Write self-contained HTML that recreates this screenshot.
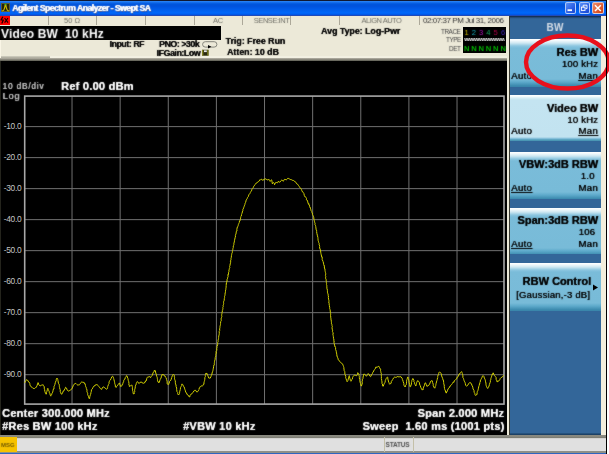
<!DOCTYPE html>
<html><head><meta charset="utf-8">
<style>
*{margin:0;padding:0;box-sizing:border-box}
html,body{width:609px;height:454px;overflow:hidden;background:#fff}
body{position:relative;font-family:"Liberation Sans",sans-serif}
.a{position:absolute}
.t{position:absolute;white-space:pre;line-height:1;filter:url(#soft)}
#win{left:0;top:0;width:607px;height:454px;background:#ece9d8}
#title{left:0;top:0;width:606px;height:16px;background:linear-gradient(#101830 0,#101830 0.9px,#2a86f4 1.2px,#1a74f0 2px,#0056dc 4px,#0052dc 6px,#0062f2 11px,#0068fa 13px,#0058e8 14.5px,#1a48c0 15.3px,#3050a8 16px)}
.ttext{color:#fff;font-weight:bold;font-size:8.7px;text-shadow:0.6px 0 0 #fff,1px 1px 0 #0a2a80}
.wbtn{top:2.2px;width:11.3px;height:11.5px;border:1px solid rgba(220,235,255,0.75);border-radius:2px;background:linear-gradient(135deg,#5a90f8,#2456e0 70%,#1a48d0)}
#stat{left:0;top:16px;width:508px;height:9.5px;background:#ece9d8}
.sep{top:16px;width:1px;height:9px;background:#aca899}
.st{color:#6e6e66;font-size:7.5px;top:17.3px;letter-spacing:-0.25px}
#hdr{left:0;top:25.5px;width:221.2px;height:14.3px;background:#000}
#info{left:0;top:25.5px;width:508px;height:35px;background:#ece9d8}
#infob{left:0;top:58px;width:508px;height:3px;background:linear-gradient(#b8b5a8,#5a5a50)}
#graph{left:0;top:61px;width:506.5px;height:374.5px;background:#000}
#lb{left:0;top:61px;width:1.2px;height:374.5px;background:#24241c}
#rbeige{left:506.5px;top:25px;width:2.3px;height:411px;background:#ece9d8}
#rdark{left:508.8px;top:16px;width:1.2px;height:420px;background:#3a3a30}
#panel{left:510px;top:16px;width:90.5px;height:420px;background:linear-gradient(#102848 0,#1c3c64 1px,#2c5a8a 2px,#336699 3px)}
#pshadow{left:510px;top:433px;width:90.5px;height:3px;background:linear-gradient(#2a5a88,#0e2844)}
#pbeige{left:600.5px;top:16px;width:5.3px;height:420px;background:#f2eedc}
#rblack{left:605.8px;top:0;width:1.2px;height:454px;background:#000}
.btn{left:509.5px;width:91px;height:47.5px;background:linear-gradient(#ffffff 0,#f2f9fc 1.5px,#cfe8f2 4px,#8cc6e0 7px,#7abcd9 9px,#78bbd8 40px,#5eaacb 43px,#3e8cb0 46.5px,#3a86ab 47.5px)}
.btn.sel{height:45.5px;background:linear-gradient(#ffffff 0,#f4fafc 1.5px,#d8eef6 3px,#c4e4f1 5px,#c2e3f0 42px,#86c0da 43.5px,#4c9ab8 45px,#4a96b4 45.5px)}
.bt{color:#000;font-size:11px;font-weight:bold;right:11px;text-shadow:0.3px 0 0 #000}
.bv{color:#000;font-size:9.5px;right:11px;letter-spacing:0.2px;text-shadow:0.4px 0 0 #000}
.bam{color:#000;font-size:9.6px;letter-spacing:0.35px;text-shadow:0.4px 0 0 #000}
.u{text-decoration:underline}
#bot{left:0;top:435px;width:606px;height:18px;background:linear-gradient(#8a8a80 0,#8a8a80 1.4px,#74746a 2.4px,#c8c8c4 3.2px,#e0e0e0 3.9px,#e0e0e0 15.5px,#909088 16.3px,#909088 18px)}
#msg{left:0;top:437.4px;width:17.2px;height:14.9px;background:#f6c200}
#blu{left:0;top:452.6px;width:606px;height:1.4px;background:#2f66c0}
.yl{position:absolute;left:0;width:21.2px;text-align:right;color:#c4c4c4;font-size:8.4px;letter-spacing:-0.35px;line-height:1;white-space:pre}
.w{color:#fff;font-weight:bold;font-size:11px;letter-spacing:0.25px;text-shadow:0.2px 0 0 #fff}
.inf{color:#000;font-weight:bold;font-size:8.8px;text-shadow:0.25px 0 0 #000}
</style></head><body><svg width="0" height="0" style="position:absolute"><filter id="soft" x="-20%" y="-60%" width="140%" height="220%"><feConvolveMatrix order="3" kernelMatrix="1 2 1 2 20 2 1 2 1" divisor="32" edgeMode="none" preserveAlpha="false"/></filter></svg><div id="root" style="position:absolute;left:0;top:0;width:609px;height:454px;">
<div class="a" id="win"></div>
<div class="a" id="title"></div>
<!-- window icon -->
<div class="a" style="left:1px;top:3.2px;width:8.7px;height:9.1px;background:#23230f;border:1px solid #5a5a38"></div>
<svg class="a" style="left:1px;top:3.2px" width="9" height="10"><path d="M0.8,8 L2.6,7.4 L3.6,5 L4.2,1.8 L4.8,1.8 L5.4,5 L6.4,7.4 L8.2,8" stroke="#c8b800" stroke-width="1.1" fill="none"/><rect x="3.7" y="0.8" width="1.6" height="1.4" fill="#30c030"/></svg>
<div class="t ttext" style="left:12px;top:4.1px;letter-spacing:-0.55px">Agilent Spectrum Analyzer - Swept SA</div>
<div class="a wbtn" style="left:565.1px"></div>
<div class="a wbtn" style="left:578.8px"></div>
<div class="a wbtn" style="left:592.3px;background:linear-gradient(135deg,#f09070,#e05a30 60%,#c84010)"></div>
<svg class="a" style="left:565px;top:2px" width="40" height="12"><rect x="2.5" y="7.3" width="4.5" height="1.8" fill="#fff"/><path d="M18.2,5.5 V3.2 H22 V6.6 H20.5" fill="none" stroke="#fff" stroke-width="0.9"/><rect x="16.4" y="5.1" width="3.6" height="3.3" fill="none" stroke="#fff" stroke-width="0.9"/><path d="M30,3.3 L35.8,9 M35.8,3.3 L30,9" stroke="#fff" stroke-width="1.5"/></svg>

<div class="a" id="stat"></div>
<div class="a" style="left:0;top:16.3px;width:9.5px;height:8.3px;background:#f00"></div>
<svg class="a" style="left:0;top:16.3px" width="10" height="9"><path d="M2.8,0.8 L1.2,3.8 L3.2,4.2 L1.8,7.6" stroke="#1a0000" stroke-width="1.3" fill="none"/><path d="M4.6,2 L8,6.6 M8,2 L4.6,6.6" stroke="#1a0000" stroke-width="1.2" fill="none"/></svg>
<div class="a sep" style="left:48.3px"></div>
<div class="a sep" style="left:96.3px"></div>
<div class="a sep" style="left:145px"></div>
<div class="a sep" style="left:193.6px"></div>
<div class="a sep" style="left:242px"></div>
<div class="a sep" style="left:290.3px"></div>
<div class="a sep" style="left:339px"></div>
<div class="a sep" style="left:418.5px"></div>
<div class="t st" style="left:64px;font-size:7.5px;letter-spacing:0">50 Ω</div>
<div class="t st" style="left:213px">AC</div>
<div class="t st" style="left:253.8px;letter-spacing:-0.45px">SENSE:INT</div>
<div class="t st" style="left:361.5px;letter-spacing:-0.5px">ALIGN AUTO</div>
<div class="t st" style="left:423px;color:#303030;font-size:8px;letter-spacing:-0.45px;top:17px">02:07:37 PM Jul 31, 2006</div>

<div class="a" id="info"></div>
<div class="a" id="hdr"></div>
<div class="t" style="left:1px;top:27.9px;color:#fff;font-size:12px;font-weight:bold;letter-spacing:0.15px">Video BW  10 kHz</div>
<div class="a" id="infob"></div>
<div class="a" style="left:0;top:56.3px;width:49.7px;height:2px;background:linear-gradient(#d4d2c4,#a8a698)"></div>
<div class="a" style="left:49.7px;top:56.2px;width:458px;height:1.8px;background:#f2f0e2"></div>
<div class="t inf" style="left:109.5px;top:40px;letter-spacing:-0.45px">Input: RF</div>
<div class="t inf" style="left:159px;top:40px;letter-spacing:-0.45px">PNO: &gt;30k</div>
<div class="t inf" style="left:156.5px;top:49px;letter-spacing:-0.42px">IFGain:Low</div>
<svg class="a" style="left:195px;top:38px" width="30" height="22"><rect x="7.6" y="3.7" width="14.3" height="5.4" rx="2.7" fill="none" stroke="#7a7a72" stroke-width="0.9"/><path d="M13,6.9 L16.4,8.7 L13,10.6 Z" fill="#000"/><rect x="7.1" y="11.8" width="6.4" height="5.9" fill="#2a2a10"/><rect x="7.1" y="11.8" width="1.2" height="5.9" fill="#8a8a20"/><rect x="12.3" y="11.8" width="1.2" height="5.9" fill="#8a8a20"/><rect x="9" y="12.3" width="2.8" height="1.8" fill="#e8e8e8"/></svg>
<div class="t inf" style="left:225.5px;top:37px">Trig: Free Run</div>
<div class="t inf" style="left:227px;top:48px">Atten: 10 dB</div>
<div class="t inf" style="left:321px;top:27px">Avg Type: Log-Pwr</div>
<div class="t" style="left:441px;top:28.6px;font-size:6.4px;color:#404040;letter-spacing:-0.45px">TRACE</div>
<div class="t" style="left:446px;top:37px;font-size:6.4px;color:#404040;letter-spacing:-0.45px">TYPE</div>
<div class="t" style="left:449px;top:45.5px;font-size:6.4px;color:#404040;letter-spacing:-0.45px">DET</div>
<div class="a" style="left:462.5px;top:27px;width:43.7px;height:26px;background:#000"></div>
<div class="t" style="left:464.4px;top:28.6px;font-size:7.6px;color:#c8b400">1</div><div class="t" style="left:471.7px;top:28.6px;font-size:7.6px;color:#10a8b8">2</div><div class="t" style="left:479.0px;top:28.6px;font-size:7.6px;color:#b010b8">3</div><div class="t" style="left:486.3px;top:28.6px;font-size:7.6px;color:#10a860">4</div><div class="t" style="left:493.6px;top:28.6px;font-size:7.6px;color:#b00848">5</div><div class="t" style="left:500.9px;top:28.6px;font-size:7.6px;color:#4020c0">6</div>
<svg class="a" style="left:0;top:0" width="609" height="60"><path d="M464.5,38 L465.35,41 L466.20,38 L467.05,41 L467.90,38 L468.75,41 L469.60,38 L470.45,41 L471.30,38 L472.15,41 L473.00,38 L473.85,41 L474.70,38 L475.55,41 L476.40,38 L477.25,41 L478.10,38 L478.95,41 L479.80,38 L480.65,41 L481.50,38 L482.35,41 L483.20,38 L484.05,41 L484.90,38 L485.75,41 L486.60,38 L487.45,41 L488.30,38 L489.15,41 L490.00,38 L490.85,41 L491.70,38 L492.55,41 L493.40,38 L494.25,41 L495.10,38 L495.95,41 L496.80,38 L497.65,41 L498.50,38 L499.35,41 L500.20,38 L501.05,41 L501.90,38 L502.75,41 L503.60,38 L504.45,41" stroke="#c8c8c8" stroke-width="0.8" fill="none"/></svg>
<div class="t" style="left:463.9px;top:45px;font-size:7.6px;font-weight:bold;color:#00b400">N</div><div class="t" style="left:471.2px;top:45px;font-size:7.6px;font-weight:bold;color:#00b400">N</div><div class="t" style="left:478.5px;top:45px;font-size:7.6px;font-weight:bold;color:#00b400">N</div><div class="t" style="left:485.8px;top:45px;font-size:7.6px;font-weight:bold;color:#00b400">N</div><div class="t" style="left:493.1px;top:45px;font-size:7.6px;font-weight:bold;color:#00b400">N</div><div class="t" style="left:500.4px;top:45px;font-size:7.6px;font-weight:bold;color:#00b400">N</div>

<div class="a" id="graph"></div>
<div class="a" id="lb"></div>
<div class="a" style="left:0;top:39.8px;width:1.2px;height:18.5px;background:#faf6e6"></div>
<div class="t" style="left:2.5px;top:83px;color:#c4c4c4;font-size:8.2px;letter-spacing:0.85px;text-shadow:0.3px 0 0 #c4c4c4">10 dB/div</div>
<div class="t" style="left:2.5px;top:91.9px;color:#c4c4c4;font-size:9.2px;letter-spacing:0.8px;text-shadow:0.4px 0 0 #c4c4c4">Log</div>
<div class="t w" style="left:61px;top:81px;font-size:11px">Ref 0.00 dBm</div>
<div class="yl" style="top:122.0px">-10.0</div>
<div class="yl" style="top:153.0px">-20.0</div>
<div class="yl" style="top:184.0px">-30.0</div>
<div class="yl" style="top:215.0px">-40.0</div>
<div class="yl" style="top:246.1px">-50.0</div>
<div class="yl" style="top:277.1px">-60.0</div>
<div class="yl" style="top:308.1px">-70.0</div>
<div class="yl" style="top:339.1px">-80.0</div>
<div class="yl" style="top:370.1px">-90.0</div>
<svg class="a" style="left:0;top:0" width="609" height="454">
<g stroke="#707070" stroke-width="1">
<line x1="72.03" y1="96.1" x2="72.03" y2="404.1"/>
<line x1="120.15" y1="96.1" x2="120.15" y2="404.1"/>
<line x1="168.28" y1="96.1" x2="168.28" y2="404.1"/>
<line x1="216.40" y1="96.1" x2="216.40" y2="404.1"/>
<line x1="264.52" y1="96.1" x2="264.52" y2="404.1"/>
<line x1="312.65" y1="96.1" x2="312.65" y2="404.1"/>
<line x1="360.77" y1="96.1" x2="360.77" y2="404.1"/>
<line x1="408.90" y1="96.1" x2="408.90" y2="404.1"/>
<line x1="457.02" y1="96.1" x2="457.02" y2="404.1"/>
<line x1="24.7" y1="126.61" x2="504.0" y2="126.61"/>
<line x1="24.7" y1="157.62" x2="504.0" y2="157.62"/>
<line x1="24.7" y1="188.63" x2="504.0" y2="188.63"/>
<line x1="24.7" y1="219.64" x2="504.0" y2="219.64"/>
<line x1="24.7" y1="250.65" x2="504.0" y2="250.65"/>
<line x1="24.7" y1="281.66" x2="504.0" y2="281.66"/>
<line x1="24.7" y1="312.67" x2="504.0" y2="312.67"/>
<line x1="24.7" y1="343.68" x2="504.0" y2="343.68"/>
<line x1="24.7" y1="374.69" x2="504.0" y2="374.69"/>
</g>
<rect x="24.7" y="96.1" width="479.3" height="308.0" fill="none" stroke="#a8a8a8" stroke-width="1.6"/>
<path d="M24.41,383.02 L24.91,382.39 L25.34,381.89 L25.65,381.16 L26.20,380.34 L26.68,379.55 L27.45,380.42 L27.80,380.38 L28.66,382.19 L28.96,382.18 L29.52,382.53 L29.83,383.64 L29.86,384.31 L30.34,385.92 L30.66,386.40 L31.27,386.76 L32.09,387.37 L32.71,388.09 L33.89,388.52 L34.61,388.48 L35.58,387.56 L36.55,387.12 L36.67,386.17 L37.16,385.41 L37.58,383.66 L38.01,382.59 L38.06,382.88 L38.31,383.01 L38.61,384.30 L39.38,385.38 L39.99,385.80 L40.67,385.87 L41.53,384.95 L42.62,384.89 L43.29,384.88 L43.35,385.41 L43.91,386.46 L44.25,386.58 L44.28,388.03 L44.34,388.90 L44.64,389.62 L44.82,391.40 L45.07,391.79 L45.42,393.28 L45.48,393.41 L45.92,394.22 L46.41,394.02 L46.46,392.57 L46.80,391.73 L47.40,389.55 L47.35,388.61 L47.77,388.58 L48.21,388.65 L48.20,389.46 L48.67,390.51 L49.27,391.70 L49.36,392.73 L49.77,393.20 L50.21,394.97 L50.52,395.76 L50.62,395.80 L50.80,396.15 L51.04,395.32 L51.38,395.03 L51.72,394.34 L51.83,393.75 L52.16,393.17 L52.41,392.83 L52.99,391.07 L53.08,390.30 L53.42,389.06 L53.93,389.05 L54.00,387.57 L54.06,386.30 L54.42,385.74 L54.96,384.70 L54.83,384.56 L55.34,382.65 L55.60,381.49 L55.84,381.57 L56.24,380.38 L56.18,379.26 L56.36,379.12 L56.78,378.74 L56.91,378.00 L57.39,378.98 L57.65,379.19 L57.87,379.74 L57.81,380.29 L58.10,380.66 L58.17,381.93 L58.51,383.41 L59.08,384.15 L59.30,385.69 L59.53,385.85 L59.37,386.54 L59.55,387.45 L59.94,389.21 L60.22,389.75 L60.30,391.09 L60.20,391.85 L60.82,392.78 L60.97,393.10 L60.94,393.90 L61.32,394.13 L62.03,393.57 L62.19,393.71 L62.85,392.11 L63.07,391.18 L63.99,390.92 L64.13,389.97 L65.06,388.94 L65.21,388.18 L65.52,387.27 L66.55,388.14 L66.84,389.25 L67.25,390.23 L67.92,390.44 L68.18,390.97 L68.80,391.20 L69.48,390.63 L70.11,390.57 L70.93,389.34 L71.74,389.04 L72.16,388.39 L72.70,387.13 L73.21,385.66 L73.67,384.93 L73.96,384.78 L74.54,383.77 L75.31,383.46 L75.97,383.50 L76.93,384.51 L77.56,385.02 L78.47,384.95 L79.30,384.85 L79.76,384.45 L80.50,383.28 L80.92,382.55 L81.43,382.15 L81.98,381.74 L82.57,382.26 L83.26,382.41 L83.96,382.16 L84.36,383.57 L85.09,383.59 L85.31,385.14 L85.51,385.50 L85.73,386.69 L86.31,387.77 L86.22,388.49 L86.70,388.84 L87.04,390.77 L86.94,391.81 L87.26,392.34 L87.78,393.75 L87.58,394.29 L87.98,395.10 L88.04,395.91 L88.51,396.30 L88.63,397.35 L88.57,397.66 L89.06,398.11 L89.08,398.68 L89.72,398.33 L89.65,396.91 L89.88,396.61 L90.25,394.87 L90.57,394.61 L91.02,392.77 L90.93,392.43 L91.38,391.25 L91.39,389.81 L92.10,389.26 L92.19,388.96 L92.86,388.04 L92.99,387.44 L93.41,386.87 L94.08,385.82 L94.93,385.90 L95.68,384.65 L96.72,384.67 L97.40,384.83 L97.96,385.37 L98.68,386.30 L99.49,387.23 L99.93,388.03 L100.40,388.59 L100.88,388.97 L101.80,389.29 L102.14,388.33 L103.12,386.98 L103.76,386.83 L104.43,387.61 L105.30,388.08 L106.36,389.27 L107.02,388.97 L107.50,388.34 L107.62,387.44 L107.70,386.47 L107.95,386.30 L108.28,384.75 L108.44,384.56 L109.07,383.44 L109.03,382.09 L109.31,381.53 L109.53,380.84 L110.11,380.33 L111.04,378.73 L111.27,378.14 L111.90,376.67 L112.32,376.30 L113.09,376.60 L113.17,376.96 L113.29,377.26 L113.54,378.16 L113.71,378.63 L114.03,379.85 L114.36,381.22 L114.62,382.43 L114.79,383.73 L114.82,384.11 L115.31,384.81 L115.38,386.11 L115.25,386.90 L115.90,387.04 L116.34,387.34 L116.60,386.42 L117.36,385.77 L118.09,384.67 L118.53,383.85 L119.09,383.21 L119.49,383.05 L119.95,384.73 L120.51,386.37 L121.53,386.14 L121.85,385.84 L122.11,384.53 L122.61,384.63 L122.83,383.55 L123.30,382.09 L123.74,381.30 L123.81,380.30 L124.55,379.24 L124.95,379.15 L125.22,377.65 L125.60,377.26 L126.10,376.62 L126.37,375.66 L126.42,375.73 L127.02,375.93 L127.21,376.01 L127.21,376.91 L127.76,378.17 L128.00,378.65 L128.13,379.86 L128.32,380.54 L128.73,381.70 L128.97,383.54 L128.68,383.97 L129.27,385.37 L129.28,385.28 L129.35,386.49 L130.51,385.78 L131.52,385.23 L132.12,385.30 L132.24,386.47 L132.46,387.63 L132.32,388.91 L132.63,389.07 L132.57,390.69 L132.98,391.52 L133.01,392.46 L133.30,393.69 L133.34,394.00 L133.97,393.38 L134.18,393.82 L134.35,392.90 L134.26,392.38 L134.76,391.79 L134.62,390.69 L134.77,389.26 L134.87,389.06 L135.15,388.08 L135.33,386.27 L135.65,385.16 L135.77,385.07 L136.22,384.09 L136.28,383.53 L136.62,382.65 L137.38,381.56 L138.25,382.78 L139.13,383.56 L139.76,382.56 L140.95,382.09 L141.59,382.03 L142.27,382.98 L143.38,383.24 L144.18,383.18 L144.49,382.89 L144.71,382.06 L145.17,382.16 L145.77,380.58 L146.45,380.57 L146.69,378.76 L147.02,377.88 L147.54,377.15 L147.90,376.74 L148.43,377.03 L149.48,376.49 L150.09,377.45 L150.94,377.22 L151.14,376.67 L151.99,375.77 L152.17,375.43 L152.77,373.98 L152.90,373.00 L153.38,372.26 L154.05,371.87 L154.37,370.33 L154.27,370.73 L155.23,370.49 L155.45,370.73 L155.70,372.99 L156.36,374.39 L156.64,374.38 L156.41,375.09 L156.83,376.62 L157.27,377.69 L157.35,378.78 L157.49,379.57 L157.53,380.78 L157.88,381.76 L158.34,381.75 L158.34,382.14 L158.87,382.82 L158.91,381.96 L159.44,382.01 L159.70,380.83 L160.15,379.62 L160.34,379.03 L161.02,378.12 L161.34,376.87 L161.37,375.68 L162.08,375.46 L162.10,374.27 L162.91,374.78 L163.60,374.62 L164.44,376.02 L164.92,375.93 L165.62,377.31 L166.11,377.74 L166.44,379.22 L166.54,379.66 L167.02,380.86 L167.18,381.83 L167.14,383.34 L167.47,384.28 L167.90,383.89 L168.16,384.21 L168.70,384.54 L168.80,383.42 L169.21,383.32 L169.59,381.41 L169.97,380.78 L170.83,380.25 L171.19,379.29 L171.72,377.50 L171.78,377.21 L172.47,375.40 L172.81,375.15 L173.02,374.71 L173.23,374.25 L173.55,374.81 L174.13,374.92 L174.35,375.55 L174.25,376.92 L174.67,377.30 L174.46,378.25 L174.79,379.72 L174.86,380.14 L175.37,380.82 L175.29,382.72 L175.62,382.89 L175.42,383.87 L176.03,384.96 L176.12,386.44 L176.15,386.71 L176.69,388.12 L176.57,389.31 L176.82,389.90 L176.88,391.48 L177.57,392.33 L177.81,392.52 L177.69,393.75 L178.30,394.81 L178.27,394.36 L178.56,394.69 L179.05,394.13 L179.24,394.24 L179.51,393.55 L179.67,392.15 L179.79,391.15 L180.30,389.72 L180.29,389.32 L180.59,387.43 L180.77,386.91 L181.19,386.44 L181.75,385.68 L181.71,384.13 L181.90,384.30 L182.59,384.26 L182.73,384.61 L183.30,385.57 L183.74,386.66 L184.07,386.88 L184.53,388.16 L184.77,389.31 L185.24,390.08 L185.37,390.92 L185.83,392.52 L186.56,392.85 L186.99,394.50 L187.56,394.51 L188.22,395.70 L188.79,395.64 L188.99,396.75 L189.86,396.78 L190.08,395.42 L190.72,394.35 L191.84,393.89 L192.34,393.07 L192.89,392.45 L193.18,392.08 L194.12,390.67 L194.52,390.72 L194.86,390.16 L195.75,390.44 L196.64,391.93 L197.68,391.77 L197.72,391.51 L198.41,390.70 L198.58,389.90 L199.18,389.37 L199.18,387.96 L199.73,387.62 L200.27,386.45 L200.67,386.57 L201.50,385.85 L202.16,386.33 L202.86,385.40 L203.53,384.21 L203.99,384.27 L203.95,382.67 L204.32,381.85 L204.15,381.69 L204.55,380.61 L204.72,379.66 L204.93,377.84 L204.89,377.26 L205.37,376.69 L205.27,375.49 L205.59,374.58 L205.66,373.68 L206.03,373.88 L206.00,373.09 L206.72,373.56 L206.79,373.21 L207.54,375.11 L207.68,375.27 L208.27,376.78 L208.63,377.96 L208.96,377.93 L209.59,378.08 L210.05,378.36 L210.91,376.73 L211.26,375.59 L211.61,375.03 L211.62,374.25 L212.13,374.27 L212.00,373.14 L212.57,371.76 L212.82,371.00 L212.91,370.60 L213.13,369.43 L213.23,368.84 L213.42,368.03 L213.62,366.90 L213.59,366.25 L213.99,365.01 L214.29,364.82 L214.29,363.37 L214.43,362.52 L214.39,362.10 L214.50,361.34 L214.83,360.13 L215.01,359.40 L215.17,359.39 L215.18,357.80 L215.30,357.36 L215.65,356.28 L215.74,356.39 L215.82,355.35 L215.67,354.82 L215.94,354.13 L216.26,352.64 L216.31,352.89 L216.06,351.67 L216.52,350.86 L216.71,350.37 L216.80,349.57 L216.77,349.71 L216.76,348.21 L217.06,347.41 L216.99,346.29 L217.23,346.04 L217.68,344.79 L217.63,343.31 L217.69,342.47 L218.04,341.69 L218.25,341.30 L218.20,341.03 L218.06,340.49 L218.42,339.16 L218.61,338.33 L218.81,337.96 L218.60,337.43 L218.75,336.04 L219.01,335.14 L219.16,334.59 L219.18,334.61 L219.27,333.45 L219.25,331.91 L219.23,331.25 L219.64,330.73 L219.71,330.40 L219.64,328.81 L220.03,327.73 L219.82,327.24 L220.00,326.37 L220.18,325.75 L220.49,324.46 L220.63,323.89 L220.51,323.52 L220.69,321.78 L220.75,321.44 L221.26,320.72 L221.15,319.28 L221.08,318.84 L221.48,317.65 L221.65,316.90 L221.91,316.37 L221.69,315.71 L221.71,314.47 L222.01,313.32 L221.96,313.11 L222.06,312.06 L222.64,310.81 L222.39,310.50 L222.67,309.72 L222.94,308.37 L222.82,307.66 L222.81,307.46 L223.31,306.41 L223.05,305.69 L223.54,304.40 L223.67,303.51 L223.55,302.25 L223.68,301.30 L223.86,301.20 L224.17,300.43 L224.31,298.91 L224.36,298.22 L224.61,297.44 L224.48,296.70 L224.96,295.37 L225.05,294.29 L224.87,293.68 L225.24,293.61 L225.36,292.10 L225.56,291.28 L225.36,291.10 L225.68,290.06 L225.81,289.59 L225.84,288.66 L226.07,287.92 L226.05,287.04 L226.23,285.85 L226.16,285.49 L226.20,285.12 L226.34,283.48 L226.42,283.83 L226.64,282.34 L226.58,281.62 L227.01,281.70 L227.10,281.26 L227.01,279.72 L227.37,278.80 L227.78,277.90 L227.56,277.05 L228.13,276.42 L227.86,275.00 L227.99,274.26 L228.49,274.59 L228.50,274.08 L228.63,272.93 L228.50,272.10 L228.98,271.51 L228.92,270.91 L228.96,269.73 L229.21,269.59 L229.37,268.49 L229.78,268.00 L229.85,267.42 L229.56,266.46 L229.89,266.10 L229.97,265.26 L230.19,263.94 L230.49,263.00 L230.60,262.28 L230.32,261.49 L230.84,261.51 L230.60,260.14 L230.98,259.62 L230.97,258.44 L231.19,257.95 L231.30,257.21 L231.46,255.54 L231.81,254.99 L231.67,254.27 L231.81,253.58 L232.28,252.72 L232.40,251.39 L232.45,250.58 L232.84,249.49 L232.99,248.64 L232.81,248.11 L233.31,247.56 L233.22,247.17 L233.31,245.87 L233.63,245.35 L233.91,244.39 L233.88,243.19 L233.96,242.91 L234.39,241.94 L234.32,240.76 L234.80,240.07 L234.65,239.09 L235.21,238.01 L235.04,237.25 L235.47,237.03 L235.37,235.47 L235.59,234.87 L235.90,233.92 L235.97,233.19 L236.46,233.05 L236.19,232.60 L236.35,231.27 L236.94,231.06 L236.97,230.03 L236.85,229.65 L237.09,228.02 L237.51,226.80 L237.78,226.70 L238.18,225.54 L238.39,224.73 L238.38,224.16 L238.75,223.62 L239.24,222.61 L239.31,222.28 L239.48,221.01 L239.88,220.99 L240.16,219.99 L240.48,219.10 L240.59,218.13 L240.65,217.58 L240.76,216.59 L241.34,216.12 L241.49,214.81 L241.63,214.23 L241.96,213.36 L242.23,213.10 L242.22,211.98 L242.76,210.86 L242.86,210.70 L242.88,209.42 L243.18,208.90 L243.81,207.85 L243.63,207.17 L244.09,206.62 L244.31,205.85 L244.79,204.81 L244.91,204.39 L245.13,203.25 L245.55,202.52 L245.74,201.98 L246.18,200.19 L246.46,199.82 L246.65,199.11 L247.18,198.70 L247.47,197.53 L247.73,197.35 L248.42,196.43 L248.46,195.92 L248.94,194.49 L249.21,194.35 L249.95,193.46 L250.18,192.66 L250.46,192.40 L250.92,191.36 L251.56,190.88 L251.78,189.64 L252.22,188.79 L252.82,188.30 L253.30,187.45 L253.53,186.69 L254.03,185.89 L254.29,185.77 L254.88,184.58 L255.33,184.22 L255.79,183.84 L256.28,183.05 L257.28,182.62 L257.52,182.06 L258.70,181.51 L259.06,181.04 L260.12,179.59 L260.59,180.16 L261.58,179.13 L262.08,179.41 L262.87,180.50 L263.72,179.30 L264.91,179.19 L265.33,178.83 L266.32,179.22 L267.08,180.03 L268.27,179.70 L269.05,179.41 L269.66,180.16 L269.93,181.31 L270.33,181.24 L270.83,180.45 L271.60,179.81 L271.83,180.50 L272.06,181.90 L272.29,183.31 L272.25,183.87 L273.03,182.97 L273.68,182.57 L273.84,182.83 L274.41,183.57 L274.57,184.75 L274.67,184.05 L275.45,183.17 L275.72,182.43 L276.39,182.49 L277.20,182.69 L277.59,182.80 L277.92,182.16 L278.43,181.17 L279.15,182.05 L279.66,182.23 L280.31,181.80 L281.10,180.59 L281.66,180.09 L282.23,180.22 L283.00,181.32 L283.73,180.68 L284.27,179.47 L284.90,179.30 L285.85,179.68 L286.27,179.84 L287.24,179.09 L287.67,178.38 L288.29,178.35 L289.53,179.01 L290.26,179.49 L291.27,179.64 L291.96,180.04 L292.78,180.43 L293.55,180.47 L294.32,181.27 L295.15,181.48 L295.64,182.09 L296.50,183.60 L297.01,183.57 L297.67,184.65 L298.11,184.72 L298.56,185.60 L299.14,186.35 L299.87,187.68 L300.02,187.91 L300.46,188.09 L301.29,189.29 L301.79,189.87 L301.79,190.54 L302.52,191.91 L303.16,192.18 L303.32,192.56 L303.87,193.48 L303.99,193.94 L304.28,195.36 L304.70,196.37 L305.04,196.98 L305.43,196.77 L306.08,197.75 L306.45,198.42 L306.46,199.80 L307.14,200.63 L307.48,200.52 L307.76,201.93 L308.03,202.96 L308.28,203.76 L308.84,203.48 L308.82,204.94 L309.55,205.08 L309.61,206.57 L309.86,207.51 L310.34,207.45 L310.61,208.88 L310.97,209.89 L311.07,210.70 L311.41,211.14 L311.77,211.45 L311.87,212.41 L312.36,212.96 L312.40,213.00 L312.37,214.39 L312.93,214.95 L312.99,215.53 L313.59,216.72 L313.69,217.25 L313.92,219.16 L314.24,220.40 L314.48,221.19 L314.71,221.11 L314.44,221.71 L314.79,222.72 L315.13,223.73 L314.89,224.38 L315.43,225.15 L315.46,225.26 L315.76,226.62 L315.84,227.54 L315.83,227.44 L316.10,229.06 L316.09,229.86 L316.62,230.15 L316.63,231.52 L316.73,231.88 L316.80,233.37 L317.24,233.95 L317.06,235.24 L317.58,235.51 L317.66,237.15 L317.99,237.65 L317.96,238.63 L317.99,239.09 L318.16,240.55 L318.42,241.28 L318.61,242.11 L318.65,242.46 L319.25,243.68 L318.97,244.81 L319.47,245.11 L319.54,246.13 L319.66,246.56 L319.57,248.40 L320.14,248.59 L320.14,249.07 L320.40,249.95 L320.62,250.99 L320.78,252.24 L320.72,252.22 L320.92,253.35 L321.08,254.17 L321.54,256.00 L321.71,257.00 L322.16,256.92 L322.22,258.16 L322.19,259.63 L322.47,260.03 L322.87,261.27 L323.09,261.45 L323.18,261.98 L323.63,263.65 L323.45,263.36 L323.65,264.43 L324.15,265.76 L324.29,265.52 L324.43,266.94 L324.52,267.93 L324.38,267.67 L324.87,269.20 L324.96,269.14 L325.05,270.28 L325.00,270.87 L325.22,271.54 L325.44,272.33 L325.40,272.95 L325.67,273.39 L325.73,274.15 L325.42,275.53 L325.55,276.17 L325.92,276.84 L325.62,277.21 L325.69,278.76 L326.20,279.66 L326.18,280.82 L326.43,281.53 L326.40,281.74 L326.28,282.24 L326.60,283.41 L326.40,284.41 L326.54,284.57 L326.58,285.10 L327.01,285.88 L326.77,286.78 L326.94,287.97 L326.93,288.82 L327.00,289.50 L327.41,289.53 L327.42,290.42 L327.41,291.14 L327.57,292.83 L328.00,293.59 L327.66,293.74 L328.17,294.33 L328.19,295.45 L328.43,296.01 L328.46,297.24 L328.24,297.74 L328.70,299.20 L328.49,299.97 L328.97,300.62 L328.91,301.41 L328.83,302.98 L329.21,303.23 L329.01,303.98 L329.39,305.30 L329.33,305.85 L329.61,307.26 L329.82,307.97 L329.63,308.25 L330.00,309.46 L330.10,309.90 L330.25,311.02 L330.37,312.40 L330.30,312.27 L330.61,313.60 L330.70,314.20 L330.47,315.67 L330.67,315.80 L330.78,317.14 L330.71,317.94 L331.04,318.83 L330.99,319.94 L331.45,321.01 L331.32,321.75 L331.47,322.70 L331.42,323.75 L331.98,324.24 L331.88,325.19 L332.00,325.54 L332.33,326.66 L332.05,327.42 L332.20,329.10 L332.20,329.19 L332.65,330.17 L332.42,331.48 L332.80,332.24 L332.97,332.61 L333.16,334.11 L332.85,334.26 L333.18,335.46 L333.17,335.81 L333.33,336.57 L333.52,338.09 L333.39,338.48 L333.78,338.70 L333.91,340.20 L333.77,340.26 L334.08,340.97 L333.94,341.99 L334.20,341.86 L334.00,342.35 L334.17,343.53 L334.75,345.88 L334.97,346.62 L334.73,346.26 L335.31,346.67 L335.17,346.81 L335.49,347.36 L335.57,347.74 L335.65,348.99 L335.58,349.41 L336.19,350.98 L336.32,351.72 L336.41,352.89 L336.61,352.83 L336.65,353.94 L336.83,354.75 L336.94,356.21 L337.16,356.13 L337.43,357.31 L337.99,358.02 L338.02,359.19 L338.30,359.83 L339.10,360.39 L339.16,360.95 L339.72,361.21 L340.05,361.81 L340.73,362.60 L341.35,362.86 L341.86,363.66 L342.79,364.32 L343.14,365.17 L343.21,365.90 L343.56,366.48 L343.83,367.21 L343.84,367.84 L343.96,369.05 L344.19,370.07 L344.17,370.77 L344.78,371.59 L344.83,372.79 L344.88,374.14 L345.08,374.80 L345.22,374.98 L345.79,376.38 L345.60,377.31 L346.01,378.64 L346.07,378.95 L346.71,380.29 L346.52,380.49 L346.83,381.33 L347.16,381.78 L347.61,381.23 L347.92,380.57 L348.26,378.99 L348.60,377.90 L348.99,376.21 L349.29,375.65 L349.54,376.68 L349.69,378.06 L350.00,378.71 L350.40,380.46 L350.62,380.88 L350.88,381.35 L351.32,380.94 L351.48,380.61 L351.81,379.48 L352.37,379.06 L352.59,377.61 L352.83,376.59 L353.22,376.28 L354.29,375.24 L355.41,375.34 L356.30,375.85 L357.13,374.97 L357.53,374.73 L357.79,372.68 L358.63,373.60 L358.96,374.36 L358.92,375.25 L359.07,375.53 L359.32,376.32 L359.33,377.58 L359.50,379.06 L359.84,379.71 L359.73,380.66 L360.07,381.94 L360.34,383.30 L360.72,383.77 L360.64,384.69 L361.09,384.97 L361.04,385.89 L361.04,385.50 L361.62,385.95 L361.58,384.78 L361.95,384.82 L362.10,384.36 L362.32,382.80 L362.14,381.62 L362.51,380.76 L362.53,379.27 L362.94,378.62 L362.98,377.98 L363.31,375.96 L363.38,375.94 L363.52,375.17 L363.55,374.28 L364.87,374.37 L365.68,375.14 L366.40,376.26 L366.88,375.62 L367.52,374.79 L368.14,373.50 L368.44,373.77 L369.31,374.84 L369.65,375.85 L370.71,376.56 L371.10,376.18 L371.21,374.77 L371.97,374.42 L372.38,373.65 L372.56,372.68 L372.99,372.46 L373.71,370.92 L374.11,370.06 L374.38,369.78 L375.10,369.12 L375.46,368.16 L375.77,367.10 L377.06,367.28 L377.67,366.89 L378.80,366.22 L379.51,367.54 L380.20,368.89 L380.23,368.77 L380.62,369.20 L380.55,370.64 L380.77,371.37 L380.77,371.58 L380.95,372.55 L381.37,373.67 L381.27,374.53 L381.36,375.89 L381.40,376.62 L381.36,378.53 L381.58,378.95 L381.61,380.02 L381.74,380.73 L382.06,381.99 L381.93,383.24 L382.02,383.53 L382.52,384.03 L382.46,385.36 L382.79,385.04 L382.73,385.94 L383.04,386.35 L383.29,386.08 L383.80,384.71 L384.15,383.77 L384.66,382.90 L385.15,382.15 L385.28,380.62 L385.78,379.46 L386.29,378.35 L386.47,377.98 L386.68,377.66 L387.04,377.27 L387.49,377.05 L387.70,377.39 L387.87,379.13 L388.19,380.01 L388.33,381.06 L388.70,382.11 L388.94,382.59 L389.25,383.43 L389.51,384.24 L389.99,383.73 L390.75,383.66 L391.20,383.03 L391.31,381.50 L391.76,380.97 L392.59,379.63 L392.97,379.06 L393.61,377.85 L394.17,377.44 L394.94,376.75 L395.57,377.37 L396.76,377.16 L397.27,376.52 L398.13,376.77 L399.11,376.89 L399.82,376.72 L400.93,376.76 L401.87,377.98 L402.13,378.19 L402.31,379.45 L402.60,379.65 L403.17,381.55 L403.23,381.84 L403.84,383.55 L403.76,384.16 L404.11,385.65 L404.47,386.47 L405.04,386.01 L405.30,386.48 L405.57,386.75 L405.58,385.40 L406.14,384.98 L406.35,384.29 L406.47,383.33 L406.63,381.75 L406.55,380.85 L406.94,379.55 L407.39,378.16 L407.51,377.29 L407.69,377.62 L407.68,377.15 L408.25,377.43 L408.24,377.51 L408.21,378.39 L408.59,379.17 L408.75,380.19 L409.15,381.93 L409.13,382.62 L409.47,383.95 L409.89,384.83 L409.78,386.22 L409.91,386.42 L410.22,386.95 L410.58,386.74 L410.65,386.10 L411.12,385.03 L411.47,384.38 L411.40,382.63 L411.79,381.37 L411.90,380.36 L412.23,379.92 L412.61,378.64 L412.81,378.77 L413.12,378.62 L413.26,379.04 L414.01,380.73 L413.85,381.76 L414.58,382.73 L414.44,383.74 L414.89,384.36 L415.23,384.84 L415.71,385.86 L415.92,385.94 L416.27,384.39 L416.40,383.14 L416.64,382.62 L417.41,381.03 L417.49,380.72 L418.27,380.97 L418.21,381.12 L418.84,381.61 L418.90,381.72 L419.48,382.75 L419.59,383.98 L419.94,385.33 L420.23,385.51 L420.74,387.18 L421.21,388.21 L421.59,389.31 L421.71,389.50 L421.84,389.75 L422.34,389.74 L422.78,389.70 L423.02,390.01 L423.18,388.08 L423.69,387.13 L424.14,385.72 L424.50,385.47 L424.77,383.94 L424.81,383.41 L425.21,382.71 L425.57,382.92 L426.11,384.30 L426.60,384.81 L426.73,386.13 L427.43,386.33 L427.65,385.74 L428.17,385.54 L428.99,385.20 L429.46,384.33 L430.05,382.97 L430.51,381.45 L430.96,381.32 L431.26,380.80 L432.03,380.58 L432.26,380.74 L432.46,382.21 L432.62,382.59 L433.24,384.18 L433.24,385.73 L433.68,386.83 L434.02,387.67 L434.45,388.00 L434.61,387.65 L435.18,387.77 L434.99,387.68 L435.27,386.26 L435.62,385.74 L435.81,385.28 L435.90,384.42 L436.07,383.40 L436.54,381.93 L436.68,380.88 L436.93,380.70 L437.21,379.48 L437.55,377.78 L437.90,377.45 L437.69,376.61 L438.06,375.00 L438.57,374.62 L438.70,373.45 L438.92,372.77 L438.86,372.66 L438.96,372.60 L439.50,372.01 L440.19,372.27 L440.71,372.95 L441.12,373.62 L441.56,374.90 L441.59,375.86 L442.07,377.05 L442.62,378.31 L442.71,378.96 L443.21,380.23 L443.39,379.96 L443.51,380.83 L443.66,382.48 L443.61,383.53 L444.07,383.74 L443.99,384.92 L444.48,386.04 L444.28,386.39 L444.44,388.18 L444.64,388.80 L444.86,389.79 L445.07,389.96 L445.48,391.07 L445.55,391.94 L445.85,391.53 L445.72,392.02 L446.25,393.14 L446.81,391.87 L446.90,391.89 L447.61,390.28 L448.07,388.78 L448.97,387.88 L449.38,387.62 L449.42,386.77 L449.97,386.82 L450.66,385.28 L450.98,385.00 L451.67,384.59 L452.19,383.69 L452.57,383.27 L453.29,381.99 L453.91,382.38 L454.25,380.79 L455.09,380.28 L455.39,379.90 L455.91,379.25 L456.59,378.87 L457.36,377.00 L457.69,376.93 L458.39,376.05 L458.80,375.04 L459.18,373.84 L459.88,373.77 L460.42,372.94 L460.54,372.55 L461.16,371.95 L461.47,371.64 L461.83,371.83 L461.90,372.22 L462.29,373.65 L462.58,373.88 L462.65,374.76 L462.88,375.74 L462.89,377.63 L463.32,378.17 L463.63,378.88 L463.72,379.45 L464.08,380.60 L464.60,381.79 L465.02,382.48 L465.33,383.61 L465.24,383.95 L465.83,385.51 L466.07,385.79 L466.46,386.21 L467.00,385.70 L468.19,384.73 L468.67,383.46 L469.38,382.87 L470.30,382.49 L470.66,382.70 L471.17,383.95 L471.56,383.99 L472.00,385.83 L472.45,386.04 L472.81,387.54 L472.85,387.53 L473.06,388.90 L473.71,390.03 L474.05,390.61 L474.07,392.24 L474.56,392.85 L474.90,393.65 L474.92,394.47 L475.24,395.24 L475.70,395.39 L476.15,395.13 L476.31,394.66 L476.78,394.88 L477.04,393.79 L477.08,393.87 L477.17,392.40 L477.32,391.59 L477.85,390.60 L478.11,389.98 L478.20,389.15 L478.44,388.20 L478.69,386.83 L479.00,385.77 L479.21,385.39 L479.48,384.03 L479.71,383.99 L479.78,382.56 L480.22,382.19 L480.42,380.04 L481.00,379.64 L481.54,378.29 L482.05,377.24 L482.34,376.36 L482.39,375.91 L482.84,376.09 L483.53,375.85 L483.99,376.36 L483.88,376.70 L484.45,378.26 L484.45,378.18 L485.05,379.44 L485.45,380.83 L485.57,381.81 L485.95,383.09 L486.01,384.70 L486.20,385.55 L486.48,386.38 L486.95,387.40 L487.08,387.65 L487.56,388.39 L488.12,388.14 L488.01,387.56 L488.29,387.42 L488.53,386.65 L489.05,386.47 L489.09,386.07 L489.31,384.72 L489.55,384.08 L490.17,382.40 L490.37,381.96 L490.40,380.34 L490.75,379.89 L490.85,378.62 L491.31,377.38 L491.55,376.94 L491.60,376.12 L491.90,375.29 L492.37,374.06 L492.58,374.54 L493.15,372.80 L493.80,374.38 L494.42,375.46 L495.13,376.46 L495.44,376.57 L496.05,377.45 L496.17,379.43 L496.65,380.47 L497.07,380.49 L497.02,382.05 L497.59,381.59 L498.04,381.67 L498.58,380.84 L498.99,380.82 L499.76,379.66 L500.31,378.39 L501.04,377.64 L501.87,377.25 L502.65,376.67 L503.52,375.46 L503.93,375.50" stroke="#d4d200" stroke-width="1" fill="none" stroke-linejoin="round"/>
</svg>
<div class="t w" style="left:2px;top:408px">Center 300.000 MHz</div>
<div class="t w" style="left:2px;top:421px">#Res BW 100 kHz</div>
<div class="t w" style="left:183px;top:421px">#VBW 10 kHz</div>
<div class="t w" style="left:417.5px;top:408px">Span 2.000 MHz</div>
<div class="t w" style="left:362.5px;top:421px">Sweep  1.60 ms (1001 pts)</div>

<div class="a" id="rbeige"></div>
<div class="a" id="rdark"></div>
<div class="a" id="panel"></div>
<div class="a" id="pbeige"></div>
<div class="t" style="left:540px;top:23px;width:30px;text-align:center;color:#e2e6ec;font-size:10px;font-weight:bold;letter-spacing:0.2px;opacity:0.92">BW</div>

<div class="a btn" style="top:39.2px;height:47.7px"></div>
<div class="t bt" style="top:47px;right:11px">Res BW</div>
<div class="t bv" style="top:58.5px">100 kHz</div>
<div class="t bam" style="left:511px;top:70.5px">Auto</div>
<div class="t bam u" style="top:70.5px;right:11px">Man</div>

<div class="a btn sel" style="top:95.2px"></div>
<div class="t bt" style="top:103px">Video BW</div>
<div class="t bv" style="top:114.5px">10 kHz</div>
<div class="t bam" style="left:511px;top:126px">Auto</div>
<div class="t bam u" style="top:126px;right:11px">Man</div>

<div class="a btn" style="top:151.5px;height:47px"></div>
<div class="t bt" style="top:159px">VBW:3dB RBW</div>
<div class="t bv" style="top:171px;right:14.5px">1.0</div>
<div class="t bam u" style="left:511px;top:182.5px">Auto</div>
<div class="t bam" style="top:182.5px;right:11px">Man</div>

<div class="a btn" style="top:207.7px;height:46.8px"></div>
<div class="t bt" style="top:215px">Span:3dB RBW</div>
<div class="t bv" style="top:227px;right:14px">106</div>
<div class="t bam u" style="left:511px;top:238.5px">Auto</div>
<div class="t bam" style="top:238.5px;right:11px">Man</div>

<div class="a btn" style="top:263.2px;height:47.6px"></div>
<div class="t bt" style="top:276px;right:18px">RBW Control</div>
<div class="t bv" style="top:290px;right:19px">[Gaussian,-3 dB]</div>
<svg class="a" style="left:592px;top:284px" width="8" height="8"><path d="M1,0.5 L6,3.5 L1,6.5 Z" fill="#000"/></svg>
<div class="a" id="pshadow"></div>

<!-- red ellipse -->
<svg class="a" style="left:0;top:0" width="609" height="454"><ellipse cx="567.4" cy="62.05" rx="41.4" ry="26.5" fill="none" stroke="#e8101c" stroke-width="4.4"/></svg>

<div class="a" id="bot"></div>
<div class="a" id="msg"></div>
<div class="t" style="left:1px;top:442px;font-size:6px;color:#705800;font-weight:bold">MSG</div>
<div class="a" style="left:384.4px;top:437px;width:1px;height:14.5px;background:#c4c0a8"></div>
<div class="a" style="left:413px;top:437px;width:1px;height:14.5px;background:#c4c0a8"></div>
<div class="t" style="left:385.5px;top:441.5px;font-size:6.5px;color:#505050;font-weight:bold;letter-spacing:-0.2px">STATUS</div>
<div class="a" id="blu"></div>
<div class="a" id="rblack"></div>
</div></body></html>
